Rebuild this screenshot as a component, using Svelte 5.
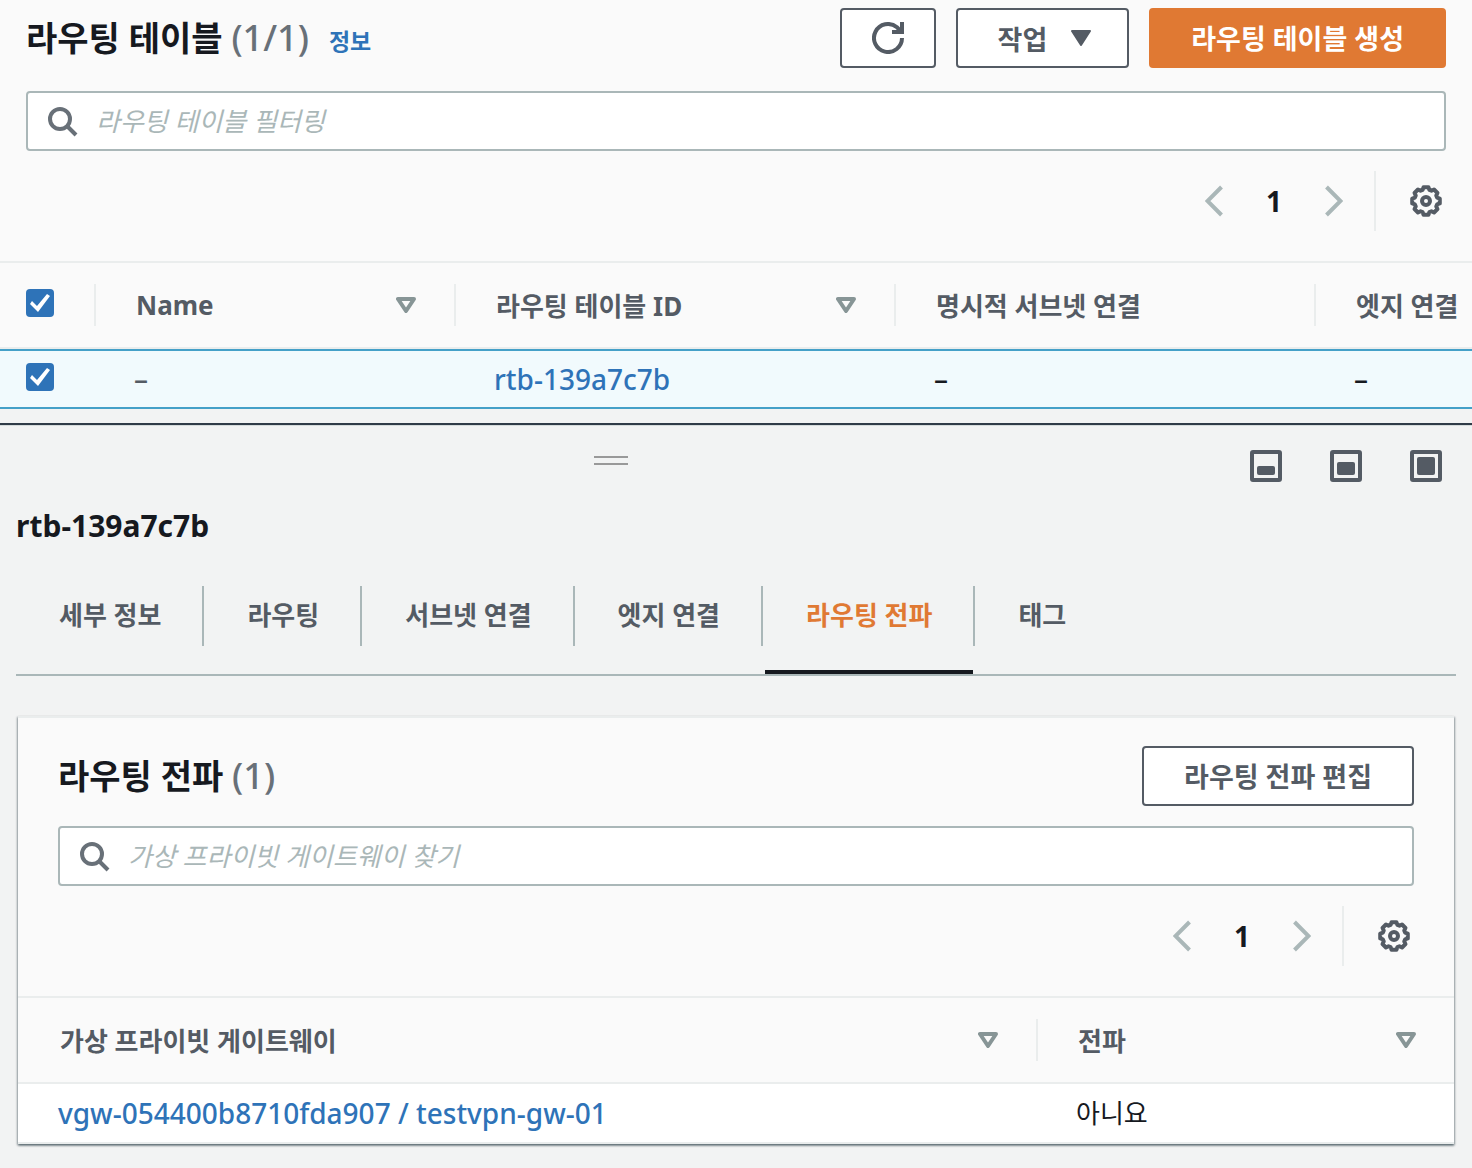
<script>
    let tabs = ['세부 정보', '라우팅', '서브넷 연결', '엣지 연결', '라우팅 전파', '태그'];
    let activeTab = $state('라우팅 전파');

    let allSelected = $state(true);
    let rowSelected = $state(true);

    function toggleAll() {
        rowSelected = allSelected;
    }

    function toggleRow() {
        allSelected = rowSelected;
    }

    // outline of the settings cog, eight teeth
    function cogPoints() {
        const points = [];
        for (let i = 0; i < 8; i++) {
            for (const [offset, radius] of [[-17, 11.6], [-10, 14], [10, 14], [17, 11.6]]) {
                const a = ((i * 45 + offset) * Math.PI) / 180;
                points.push(`${(16 + radius * Math.sin(a)).toFixed(2)},${(16 - radius * Math.cos(a)).toFixed(2)}`);
            }
        }
        return points.join(' ');
    }
</script>

{#snippet search(id, label)}
    <div class="search">
        <label for={id} aria-label={label}>
            <svg width="32" height="32" viewBox="0 0 32 32" fill="none" stroke="#687078" stroke-width="4">
                <circle cx="14" cy="14" r="10" />
                <path d="M21 21l9 9" />
            </svg>
        </label>
        <input {id} type="text" placeholder={label} />
    </div>
{/snippet}

{#snippet pager()}
    <div class="pager">
        <button class="icon-btn" aria-label="이전 페이지">
            <svg width="18" height="32" viewBox="0 0 18 32" fill="none" stroke="#aab7b8" stroke-width="4">
                <path d="M16.5 2L2.5 16l14 14" />
            </svg>
        </button>
        <span class="page">1</span>
        <button class="icon-btn" aria-label="다음 페이지">
            <svg width="18" height="32" viewBox="0 0 18 32" fill="none" stroke="#aab7b8" stroke-width="4">
                <path d="M1.5 2l14 14-14 14" />
            </svg>
        </button>
        <span class="pager-line"></span>
        <button class="icon-btn" aria-label="기본 설정">
            <svg width="32" height="32" viewBox="0 0 32 32" fill="none" stroke="#545b64" stroke-width="4" stroke-linejoin="round">
                <polygon points={cogPoints()} />
                <circle cx="16" cy="16" r="4" />
            </svg>
        </button>
    </div>
{/snippet}

{#snippet sortable(text)}
    <div class="th-inner">
        {text}
        <button class="icon-btn" aria-label="{text} 정렬">
            <svg width="20" height="16" viewBox="0 0 20 16" fill="none" stroke="#879596" stroke-width="4" stroke-linejoin="round">
                <path d="M2 2h16l-8 12z" />
            </svg>
        </button>
    </div>
{/snippet}

<section class="list">
    <header class="list-header">
        <div class="title-row">
            <h1>라우팅 테이블 <span class="count">(1/1)</span></h1>
            <a class="info" href="#info">정보</a>
            <div class="actions">
                <button class="btn refresh" aria-label="새로 고침">
                    <svg width="32" height="32" viewBox="0 0 32 32" fill="none" stroke="#545b64" stroke-width="4">
                        <path d="M30 16a14 14 0 1 1-5-10.700l3 3" />
                        <path d="M30 0v10H20" />
                    </svg>
                </button>
                <button class="btn menu">
                    작업
                    <svg width="20" height="16" viewBox="0 0 20 16" fill="#545b64" stroke="#545b64" stroke-width="2" stroke-linejoin="round">
                        <path d="M1 1h18l-9 14z" />
                    </svg>
                </button>
                <button class="btn primary">라우팅 테이블 생성</button>
            </div>
        </div>
        {@render search('table-filter', '라우팅 테이블 필터링')}
        {@render pager()}
    </header>

    <table class="routes">
        <thead>
            <tr>
                <th class="check"><input type="checkbox" aria-label="모두 선택" bind:checked={allSelected} onchange={toggleAll} /></th>
                <th class="name">{@render sortable('Name')}</th>
                <th class="id">{@render sortable('라우팅 테이블 ID')}</th>
                <th class="subnet"><div class="th-inner">명시적 서브넷 연결</div></th>
                <th><div class="th-inner">엣지 연결</div></th>
            </tr>
        </thead>
        <tbody>
            <tr class:selected={rowSelected}>
                <td class="check"><input type="checkbox" aria-label="rtb-139a7c7b 선택" bind:checked={rowSelected} onchange={toggleRow} /></td>
                <td class="muted">–</td>
                <td><a href="#rtb-139a7c7b">rtb-139a7c7b</a></td>
                <td>–</td>
                <td>–</td>
            </tr>
        </tbody>
    </table>
</section>

<section class="panel">
    <div class="panel-bar">
        <div class="drag"><span class="handle"></span></div>
        <div class="sizes">
            {#each [[16, 9], [12, 13], [7, 18]] as [y, height]}
                <button class="icon-btn" aria-label="패널 크기">
                    <svg width="32" height="32" viewBox="0 0 32 32">
                        <rect x="2" y="2" width="28" height="28" rx="1" fill="none" stroke="#545b64" stroke-width="4" />
                        <rect x="7" {y} width="18" {height} rx="2" fill="#545b64" />
                    </svg>
                </button>
            {/each}
        </div>
    </div>

    <h2>rtb-139a7c7b</h2>

    <ul class="tabs" role="tablist">
        {#each tabs as tab}
            <li role="presentation">
                <button role="tab" aria-selected={activeTab === tab} class:active={activeTab === tab} onclick={() => (activeTab = tab)}>{tab}</button>
            </li>
        {/each}
    </ul>

    <div class="card">
        <header class="card-header">
            <div class="title-row">
                <h3>라우팅 전파 <span class="count">(1)</span></h3>
                <div class="actions">
                    <button class="btn">라우팅 전파 편집</button>
                </div>
            </div>
            {@render search('gateway-filter', '가상 프라이빗 게이트웨이 찾기')}
            {@render pager()}
        </header>

        <table class="gateways">
            <thead>
                <tr>
                    <th class="gateway">{@render sortable('가상 프라이빗 게이트웨이')}</th>
                    <th>{@render sortable('전파')}</th>
                </tr>
            </thead>
            <tbody>
                <tr>
                    <td><a href="#vgw">vgw-054400b8710fda907 / testvpn-gw-01</a></td>
                    <td class="korean">아니요</td>
                </tr>
            </tbody>
        </table>
    </div>
</section>

<style>
    :global(body) {
        margin: 0;
        background: #f2f3f3;
        color: #16191f;
        font-family: "Noto Sans", "Noto Sans CJK KR", sans-serif;
        font-size: 26px;
    }

    button, input {
        font: inherit;
        color: inherit;
        margin: 0;
    }

    button {
        cursor: pointer;
    }

    svg {
        display: block;
        flex: none;
    }

    a {
        color: #2e73b8;
        text-decoration: none;
    }

    .list-header {
        background: #fafafa;
        padding: 8px 26px 30px;
    }

    .title-row {
        display: flex;
        align-items: center;
        height: 60px;
        margin-bottom: 23px;
    }

    h1, h3 {
        margin: 0;
        font-size: 34px;
        line-height: 60px;
        font-weight: 700;
        white-space: nowrap;
    }

    .count {
        font-size: 36px;
        font-weight: 500;
        color: #687078;
    }

    .info {
        margin: 4px 0 0 20px;
        font-size: 23px;
        font-weight: 700;
    }

    .actions {
        display: flex;
        gap: 20px;
        margin-left: auto;
    }

    .btn {
        display: flex;
        align-items: center;
        justify-content: center;
        box-sizing: border-box;
        height: 60px;
        padding: 0 40px 2px;
        border: 2px solid #545b64;
        border-radius: 4px;
        background: #fff;
        color: #545b64;
        font-size: 27px;
        font-weight: 700;
        white-space: nowrap;
    }

    .refresh {
        padding: 0 30px;
    }

    .menu {
        gap: 24px;
        padding: 0 36px 0 40px;
    }

    .primary {
        border-color: #e07933;
        background: #e07933;
        color: #fff;
    }

    .search {
        display: flex;
        align-items: center;
        box-sizing: border-box;
        height: 60px;
        padding: 0 18px;
        gap: 18px;
        border: 2px solid #aab7b8;
        border-radius: 4px;
        background: #fff;
    }

    .search input {
        flex: 1;
        min-width: 0;
        padding: 0;
        border: 0;
        outline: 0;
        background: none;
    }

    .search input::placeholder {
        color: #aab7b8;
        font-style: italic;
        opacity: 1;
    }

    .pager {
        display: flex;
        align-items: center;
        justify-content: flex-end;
        height: 60px;
        margin-top: 20px;
        padding-right: 4px;
    }

    .page {
        width: 102px;
        text-align: center;
        font-size: 28px;
        font-weight: 700;
    }

    .pager-line {
        width: 2px;
        height: 60px;
        margin: 0 34px 0 31px;
        background: #eaeded;
    }

    .icon-btn {
        padding: 0;
        border: 0;
        background: none;
    }

    table {
        width: 100%;
        table-layout: fixed;
        border-collapse: separate;
        border-spacing: 0;
    }

    th {
        height: 84px;
        padding: 0;
        border-top: 2px solid #eaeded;
        border-bottom: 2px solid #eaeded;
        background: #fafafa;
        color: #545b64;
        text-align: left;
        white-space: nowrap;
    }

    .th-inner {
        display: flex;
        align-items: center;
        justify-content: space-between;
        height: 42px;
        padding: 0 38px 0 40px;
    }

    th:not(:last-child) .th-inner {
        border-right: 2px solid #eaeded;
    }

    td {
        height: 56px;
        padding: 0 38px;
        font-size: 28px;
        font-weight: 500;
        line-height: 40px;
        white-space: nowrap;
    }

    th.check, td.check {
        box-sizing: border-box;
        width: 96px;
        padding: 0 0 4px;
    }

    th.check {
        height: 88px;
        background: linear-gradient(#eaeded, #eaeded) right center / 2px 42px no-repeat #fafafa;
    }

    td.check {
        height: 60px;
    }

    input[type="checkbox"] {
        appearance: none;
        display: block;
        width: 28px;
        height: 28px;
        margin-left: 26px;
        border-radius: 4px;
        border: 2px solid #687078;
        background: #fff;
    }

    input[type="checkbox"]:checked {
        border: 0;
        background: #2e73b8;
    }

    input[type="checkbox"]:checked::before {
        content: "";
        display: block;
        width: 28px;
        height: 28px;
        background: #fff;
        clip-path: polygon(4px 15px, 6px 12px, 11px 17px, 21px 5px, 24px 7px, 12px 23px);
    }

    .name {
        width: 360px;
    }

    .id {
        width: 440px;
    }

    .subnet {
        width: 420px;
    }

    .routes td {
        background: #fff;
        border-top: 2px solid #eaeded;
        border-bottom: 2px solid #eaeded;
    }

    .routes .selected td {
        background: #f1fafd;
        border-color: #44a0c8;
    }

    .muted {
        color: #545b64;
    }

    .panel {
        margin-top: 14px;
        padding-bottom: 24px;
        border-top: 2px solid #2f3b47;
        box-shadow: inset 0 1px 0 #d5dbdb;
    }

    .panel-bar {
        display: flex;
        align-items: center;
        padding: 25px 30px 0 0;
    }

    .drag {
        flex: 1;
        padding-right: 28px;
        padding-bottom: 12px;
    }

    .handle {
        display: block;
        box-sizing: border-box;
        width: 34px;
        height: 9px;
        margin: 0 auto;
        border: solid #999;
        border-width: 2px 0;
    }

    .sizes {
        display: flex;
        gap: 48px;
    }

    h2 {
        margin: 24px 16px 40px;
        font-size: 30px;
        line-height: 40px;
        font-weight: 700;
    }

    .tabs {
        display: flex;
        margin: 0 16px 40px;
        padding: 0;
        list-style: none;
        border-bottom: 2px solid #aab7b8;
    }

    .tabs li {
        display: flex;
        margin-left: 2px;
    }

    .tabs li:not(:last-child)::after {
        content: "";
        width: 2px;
        height: 60px;
        background: #aab7b8;
    }

    .tabs button {
        box-sizing: border-box;
        height: 88px;
        padding: 0 41px 26px;
        border: 0;
        border-bottom: 4px solid transparent;
        background: none;
        color: #545b64;
        font-weight: 700;
        line-height: 58px;
        white-space: nowrap;
    }

    .tabs button.active {
        border-bottom-color: #16191f;
        color: #e07933;
    }

    .card {
        margin: 0 18px;
        border-top: 2px solid #eaeded;
        background: #fff;
        box-shadow: 0 2px 2px 0 rgba(0, 28, 36, 0.3), 1px 1px 2px 0 rgba(0, 28, 36, 0.3), -1px 1px 2px 0 rgba(0, 28, 36, 0.3);
    }

    .card-header {
        padding: 28px 40px 30px;
        background: #fafafa;
    }

    .card-header .title-row {
        margin-bottom: 20px;
    }

    .gateway {
        width: 1020px;
    }

    .gateways th:first-child .th-inner {
        padding-left: 42px;
    }

    .gateways td:first-child {
        padding-left: 40px;
    }

    .gateways td {
        height: 58px;
        border-bottom: 2px solid #eaeded;
    }

    td.korean {
        font-size: 26px;
        font-weight: 400;
    }
</style>
